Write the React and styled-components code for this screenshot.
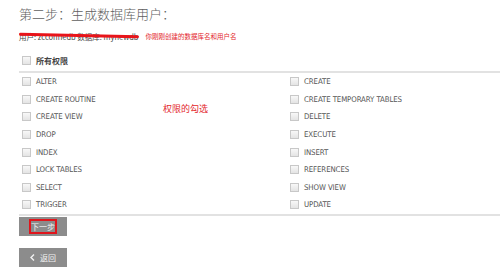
import React from "react";
import styled, { createGlobalStyle } from "styled-components";

const Global = createGlobalStyle`
  html, body { margin: 0; padding: 0; background: #fff; }
  body { font-family: "DejaVu Sans Condensed", "DejaVu Sans", "Noto Sans CJK SC", sans-serif; overflow: hidden; }
`;

const Page = styled.div`
  position: relative;
  width: 500px;
  height: 271px;
  padding-left: 19px;
  box-sizing: border-box;
`;

const Title = styled.h2`
  margin: 0;
  height: 26px;
  line-height: 27px;
  font-family: "Noto Sans CJK SC", sans-serif;
  font-weight: 300;
  font-size: 13px;
  color: #606060;
`;

const InfoLine = styled.div`
  height: 20px;
  display: flex;
  align-items: center;
  gap: 7px;
`;

const Struck = styled.span`
  position: relative;
  font-family: "Noto Sans CJK SC", sans-serif;
  font-size: 7.5px;
  color: #444;
  white-space: nowrap;
`;

const StrikeMark = styled.span`
  position: absolute;
  left: 0;
  right: 0;
  top: 50%;
  height: 3px;
  margin-top: -2px;
  background: #e8141a;
  border-radius: 2px;
  transform: rotate(1.2deg);
`;

const Note = styled.span`
  font-family: "Noto Sans CJK SC", sans-serif;
  font-size: 6.5px;
  color: #e3262b;
  white-space: nowrap;
`;

const AllRow = styled.label`
  display: flex;
  align-items: center;
  gap: 5px;
  height: 22px;
  margin-top: 3px;
  padding-left: 3px;
  border-bottom: 2px solid #e2e2e2;
`;

const AllText = styled.span`
  font-family: "Noto Sans CJK SC", sans-serif;
  font-weight: 700;
  font-size: 8px;
  color: #444;
`;

const Box = styled.span`
  display: inline-block;
  width: 7px;
  height: 7px;
  border: 1px solid #c8c8c8;
  background: linear-gradient(#f8f8f8, #e4e4e4);
  flex: none;
`;

const Grid = styled.div`
  display: grid;
  grid-template-columns: 268px 1fr;
  grid-auto-rows: 17.6px;
  border-bottom: 2px solid #e2e2e2;
`;

const Item = styled.label`
  display: flex;
  align-items: center;
  gap: 3px;
  padding-left: 3px;
  font-size: 7.8px;
  color: #555;
  letter-spacing: -0.1px;
`;

const ItemText = styled.span`
  padding-left: 2px;
`;

const Annotation = styled.span`
  position: absolute;
  left: 163px;
  top: 102px;
  font-family: "Noto Sans CJK SC", sans-serif;
  font-size: 9px;
  color: #e3262b;
`;

const Buttons = styled.div`
  display: flex;
  flex-direction: column;
  align-items: flex-start;
  gap: 12px;
  margin-top: 1px;
`;

const Button = styled.button`
  width: 48px;
  height: 19px;
  border: none;
  padding: 0;
  background: #8c8c8c;
  color: #f2f2f2;
  font-family: "Noto Sans CJK SC", sans-serif;
  font-size: 8px;
  white-space: nowrap;
  display: flex;
  align-items: center;
  justify-content: center;
  gap: 5px;
`;

const Outlined = styled.span`
  display: inline-flex;
  align-items: center;
  justify-content: center;
  box-sizing: border-box;
  width: 28px;
  height: 15px;
  border: 2px solid #e0151c;
  white-space: nowrap;
`;

const Chevron = styled.svg`
  width: 5px;
  height: 7px;
`;

const left = ["ALTER", "CREATE ROUTINE", "CREATE VIEW", "DROP", "INDEX", "LOCK TABLES", "SELECT", "TRIGGER"];
const right = ["CREATE", "CREATE TEMPORARY TABLES", "DELETE", "EXECUTE", "INSERT", "REFERENCES", "SHOW VIEW", "UPDATE"];

export default function App() {
  const cells = [];
  left.forEach((l, i) => {
    cells.push(
      <Item key={"l" + i}>
        <Box />
        <ItemText>{l}</ItemText>
      </Item>
    );
    cells.push(
      <Item key={"r" + i}>
        <Box />
        <ItemText>{right[i]}</ItemText>
      </Item>
    );
  });
  return (
    <Page>
      <Global />
      <Title>第二步：生成数据库用户：</Title>
      <InfoLine>
        <Struck>
          用户: zcconnedb 数据库: mynewdb
          <StrikeMark />
        </Struck>
        <Note>你刚刚创建的数据库名和用户名</Note>
      </InfoLine>
      <AllRow>
        <Box />
        <AllText>所有权限</AllText>
      </AllRow>
      <Grid>{cells}</Grid>
      <Annotation>权限的勾选</Annotation>
      <Buttons>
        <Button>
          <Outlined>下一步</Outlined>
        </Button>
        <Button>
          <Chevron viewBox="0 0 5 7">
            <path d="M4 0.5 L1 3.5 L4 6.5" fill="none" stroke="#f2f2f2" strokeWidth="1.4" />
          </Chevron>
          返回
        </Button>
      </Buttons>
    </Page>
  );
}
